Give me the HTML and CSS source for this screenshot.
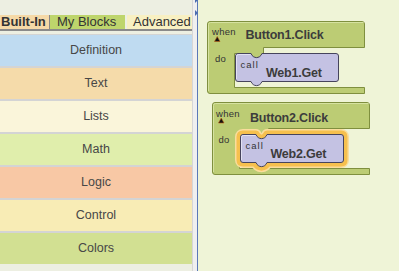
FILE: index.html
```html
<!DOCTYPE html>
<html lang="en">
<head>
  <meta charset="UTF-8" />
  <meta name="viewport" content="width=device-width, initial-scale=1" />
  <title>Blocks Editor</title>
  <link rel="stylesheet" href="styles.css">
</head>
<body>
  <div class="editor">
    <div class="drawer">
      <div class="tabs">
        <div class="tab tab-builtin">Built-In</div>
        <div class="tab tab-mine">My Blocks</div>
        <div class="tab tab-adv">Advanced</div>
      </div>
      <div class="categories">
        <div class="cat cat-def">Definition</div>
        <div class="cat cat-text">Text</div>
        <div class="cat cat-lists">Lists</div>
        <div class="cat cat-math">Math</div>
        <div class="cat cat-logic">Logic</div>
        <div class="cat cat-control">Control</div>
        <div class="cat cat-colors">Colors</div>
      </div>
    </div>

    <div class="splitter">
      <span class="arrow arrow-top"></span>
      <span class="arrow arrow-mid"></span>
    </div>

    <div class="workspace">
      <svg class="block block-one" width="162" height="76" viewBox="0 0 162 76">
        <path class="event" d="M0.5,3 Q0.5,0.5 3,0.5 H155 Q157.5,0.5 157.5,3 V26.5 H56.5 V32.5 H55 C53,38 46,38 44,32.5 H27.5 V66.5 H157.5 V72.5 H3 Q0.5,72.5 0.5,70 Z"/>
        <path class="hl" d="M1.5,70 V3.5 Q1.5,1.5 3.5,1.5 H156.5"/>
        <text class="small" x="5" y="14">when</text>
        <polygon class="tri" points="7.5,20.5 13,20.5 10.25,15.5"/>
        <text class="name" x="38.5" y="18">Button1.Click</text>
        <text class="small" x="8" y="41">do</text>
        <path class="call" d="M31,32.5 H44 C46,38 53,38 55,32.5 H129 Q131.5,32.5 131.5,35 V58 Q131.5,60.5 129,60.5 H55 C53,66 46,66 44,60.5 H31 Q28.5,60.5 28.5,58 V35 Q28.5,32.5 31,32.5 Z"/>
        <path class="call-hl" d="M29.5,58 V35.5 Q29.5,33.5 31.5,33.5 H43.5"/>
        <text class="small spaced" x="33.5" y="46.5">call</text>
        <text class="name" x="59" y="56">Web1.Get</text>
      </svg>

      <svg class="block block-two" width="162" height="76" viewBox="0 0 162 76">
        <path class="event" d="M0.5,3 Q0.5,0.5 3,0.5 H155 Q157.5,0.5 157.5,3 V26.5 H56.5 V32.5 H55 C53,38 46,38 44,32.5 H27.5 V66.5 H157.5 V72.5 H3 Q0.5,72.5 0.5,70 Z"/>
        <path class="hl" d="M1.5,70 V3.5 Q1.5,1.5 3.5,1.5 H156.5"/>
        <text class="small" x="4" y="14.5">when</text>
        <polygon class="tri" points="6.5,21 12,21 9.25,16"/>
        <text class="name" x="38" y="19.5">Button2.Click</text>
        <text class="small" x="6.5" y="41">do</text>
        <path class="glow-outer" d="M31,32.5 H44 C46,38 53,38 55,32.5 H129 Q131.5,32.5 131.5,35 V58 Q131.5,60.5 129,60.5 H55 C53,66 46,66 44,60.5 H31 Q28.5,60.5 28.5,58 V35 Q28.5,32.5 31,32.5 Z"/>
        <path class="glow" d="M31,32.5 H44 C46,38 53,38 55,32.5 H129 Q131.5,32.5 131.5,35 V58 Q131.5,60.5 129,60.5 H55 C53,66 46,66 44,60.5 H31 Q28.5,60.5 28.5,58 V35 Q28.5,32.5 31,32.5 Z"/>
        <path class="call" d="M31,32.5 H44 C46,38 53,38 55,32.5 H129 Q131.5,32.5 131.5,35 V58 Q131.5,60.5 129,60.5 H55 C53,66 46,66 44,60.5 H31 Q28.5,60.5 28.5,58 V35 Q28.5,32.5 31,32.5 Z"/>
        <path class="call-hl" d="M29.5,58 V35.5 Q29.5,33.5 31.5,33.5 H43.5"/>
        <text class="small spaced" x="33.5" y="47">call</text>
        <text class="name" x="58.5" y="56">Web2.Get</text>
      </svg>
    </div>
  </div>
</body>
</html>
```

FILE: styles.css
```css
body { margin: 0; font-family: "Liberation Sans", Arial, sans-serif; }
.editor { display: flex; height: 271px; overflow: hidden; }

.drawer { width: 192px; border-right: 1px solid #d6d6d6; background: #edefe2; }
.tabs { display: flex; margin-top: 15px; height: 14px; border-bottom: 2px solid #8a8a8a; font-size: 13px; line-height: 14px; color: #333; }
.tab { height: 14px; white-space: nowrap; box-sizing: border-box; }
.tab-builtin { width: 50px; background: #f5d9a7; border-right: 1px solid #888; font-weight: bold; padding-left: 1px; }
.tab-mine { width: 75px; background: #bed56c; padding-left: 7px; }
.tab-adv { flex: 1; margin-left: 2px; background: #f8f0c2; padding-left: 6px; }

.categories { margin-top: 3px; border-top: 1px solid #d4d4d4; background: #d4d4d4; display: flex; flex-direction: column; gap: 2px; }
.cat { height: 31px; line-height: 31px; text-align: center; font-size: 12.5px; color: #474747; }
.cat-def { background: #bfdbf1; }
.cat-text { background: #f5dbaa; }
.cat-lists { background: #faf5da; }
.cat-math { background: #e0eeac; }
.cat-logic { background: #f8c8a5; }
.cat-control { background: #f8ecb5; }
.cat-colors { background: #d2e092; }

.splitter { position: relative; width: 4px; background: #efefef; border-right: 1px solid #5a78b8; }
.arrow { position: absolute; left: 2px; width: 0; height: 0; border-left: 3px solid #4a6cb0; border-top: 3px solid transparent; border-bottom: 3px solid transparent; }
.arrow-top { top: -3px; }
.arrow-mid { top: 10px; }

.workspace { position: relative; flex: 1; background: #eff4d7; }
.block { position: absolute; overflow: visible; }
.block-one { left: 9px; top: 21px; }
.block-two { left: 14px; top: 102px; }

.event { fill: #bccc74; stroke: #7f8f3e; stroke-width: 1; }
.hl { fill: none; stroke: #d6e2a0; stroke-width: 1; }
.call { fill: #c4c2e3; stroke: #46445c; stroke-width: 1; }
.call-hl { fill: none; stroke: #e2e1f3; stroke-width: 1; }
.glow { fill: none; stroke: #f6c04e; stroke-width: 8; stroke-linejoin: round; }
.glow-outer { fill: none; stroke: #fadd9c; stroke-width: 11; stroke-linejoin: round; }
.tri { fill: #111; stroke: #b85a10; stroke-width: 0.6; }

.small { font-family: "Liberation Sans", Arial, sans-serif; font-size: 9.5px; letter-spacing: 0.3px; fill: #333; }
.spaced { letter-spacing: 1px; }
.name { font-family: "Liberation Sans", Arial, sans-serif; font-size: 12.5px; font-weight: bold; letter-spacing: -0.2px; fill: #3c3c3c; }
```
